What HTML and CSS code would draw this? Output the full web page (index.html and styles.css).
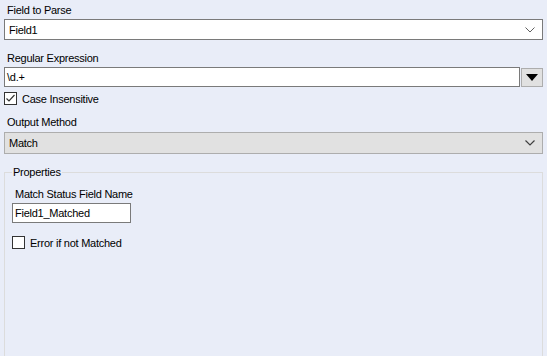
FILE: index.html
```html
<!DOCTYPE html>
<html lang="en">
<head>
    <meta charset="UTF-8">
    <title>RegEx Configuration</title>
    <link rel="stylesheet" href="styles.css">
</head>
<body>
    <div class="panel">
        <label class="field-label">Field to Parse</label>
        <div class="select">
            <span>Field1</span>
            <svg class="chevron" width="10" height="6" viewBox="0 0 10 6"><path d="M0.5 0.5 L5 5 L9.5 0.5" fill="none" stroke="#606060" stroke-width="1"/></svg>
        </div>

        <label class="field-label regex-label">Regular Expression</label>
        <div class="regex-row">
            <div class="textbox regex-box">\d.+</div>
            <div class="drop-button">
                <svg width="12" height="7" viewBox="0 0 12 7"><path d="M0 0 H12 L6 7 Z" fill="#000"/></svg>
            </div>
        </div>

        <div class="check-row">
            <span class="checkbox">
                <svg width="11" height="11" viewBox="0 0 11 11"><path d="M1.5 5.5 L4 8 L9.5 2" fill="none" stroke="#333" stroke-width="1.2"/></svg>
            </span>
            <span>Case Insensitive</span>
        </div>

        <label class="field-label method-label">Output Method</label>
        <div class="select select-gray">
            <span>Match</span>
            <svg class="chevron" width="10" height="6" viewBox="0 0 10 6"><path d="M0.5 0.5 L5 5 L9.5 0.5" fill="none" stroke="#404040" stroke-width="1.2"/></svg>
        </div>

        <fieldset class="group">
            <legend>Properties</legend>
            <label class="field-label status-label">Match Status Field Name</label>
            <div class="textbox status-box">Field1_Matched</div>
            <div class="check-row error-row">
                <span class="checkbox"></span>
                <span>Error if not Matched</span>
            </div>
        </fieldset>
    </div>
</body>
</html>
```

FILE: styles.css
```css
body {
    margin: 0;
    background-color: #e9edf8;
    font-family: "Liberation Sans", Arial, sans-serif;
    font-size: 11px;
    letter-spacing: -0.25px;
    color: #000;
    overflow: hidden;
}
.panel {
    padding: 0 4px;
    display: flex;
    flex-direction: column;
    height: 356px;
}
.field-label {
    display: block;
    padding-left: 3px;
    height: 14px;
    line-height: 14px;
    margin-top: 3px;
    margin-bottom: 2px;
}
.select {
    height: 19px;
    border: 1px solid #7a7a7a;
    background-color: #fff;
    display: flex;
    align-items: center;
    justify-content: space-between;
    padding: 0 7px 0 4px;
}
.select-gray {
    background-color: #e1e1e1;
    border-color: #adadad;
    height: 20px;
}
.regex-label {
    margin-top: 11px;
}
.regex-row {
    display: flex;
    gap: 1px;
}
.textbox {
    border: 1px solid #7a7a7a;
    background-color: #fff;
    height: 18px;
    line-height: 18px;
    padding-left: 2px;
}
.regex-box {
    flex: 1;
}
.drop-button {
    width: 20px;
    height: 17px;
    margin-top: 1px;
    border: 1px solid #adadad;
    background-color: #e1e1e1;
    display: flex;
    align-items: center;
    justify-content: center;
}
.check-row {
    display: flex;
    align-items: center;
    gap: 5px;
    margin-top: 5px;
    height: 13px;
}
.checkbox {
    width: 11px;
    height: 11px;
    border: 1px solid #333;
    background-color: #fff;
    display: flex;
    align-items: center;
    justify-content: center;
}
.method-label {
    margin-top: 10px;
    margin-bottom: 3px;
}
.group {
    flex: 1;
    margin: 12px 0 0 0;
    padding: 0 7px;
    border: 1px solid #dcdcdc;
    border-bottom: none;
}
.group legend {
    padding: 0 1px;
    margin-left: 0;
    line-height: 12px;
}
.status-label {
    margin-top: 9px;
    padding-left: 3px;
}
.status-box {
    width: 115px;
}
.error-row {
    margin-top: 13px;
}
```
